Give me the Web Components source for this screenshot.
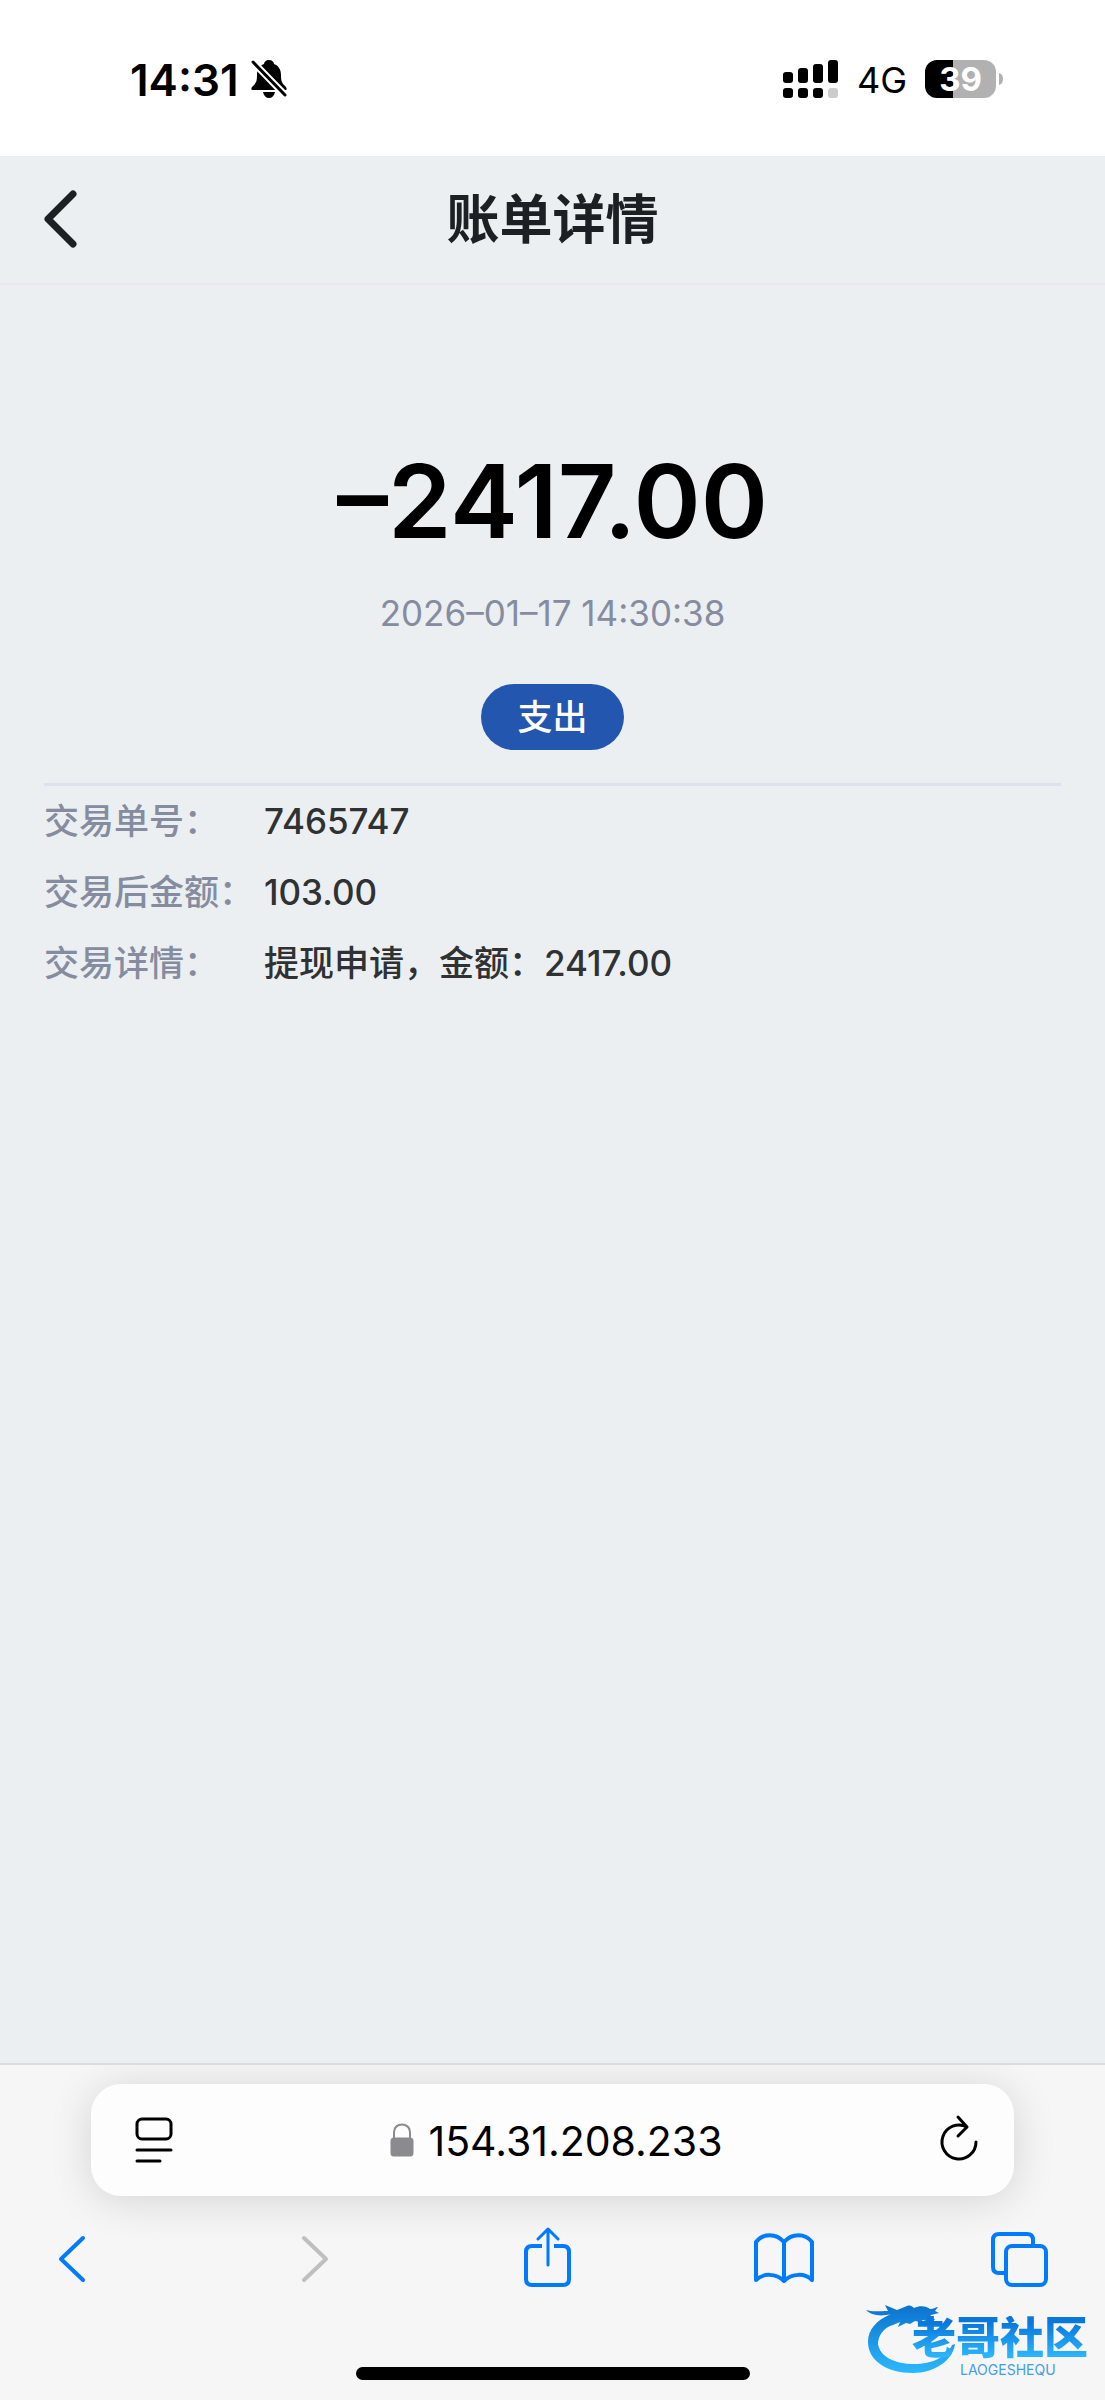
<!DOCTYPE html>
<html lang="zh-CN">

<head>
  <meta charset="UTF-8">
  <meta name="viewport" content="width=device-width, initial-scale=1">
  <title>账单详情</title>
  <style>
    body {
      margin: 0;
      min-height: 100vh;
      display: flex;
      flex-direction: column;
      background: #ebeff2;
      font-family: Inter, "Noto Sans CJK SC", sans-serif;
    }
    bill-detail {
      flex: 1;
    }
  </style>
</head>

<body>
  <status-bar time="14:31" network="4G" battery="39"></status-bar>
  <nav-header>账单详情</nav-header>
  <bill-detail>
    <span slot="amount">–2417.00</span>
    <span slot="date">2026–01–17 14:30:38</span>
    <span slot="type">支出</span>
    <bill-row label="交易单号：">7465747</bill-row>
    <bill-row label="交易后金额：">103.00</bill-row>
    <bill-row label="交易详情：">提现申请，金额：2417.00</bill-row>
  </bill-detail>
  <browser-bar url="154.31.208.233"></browser-bar>

  <script>
    // status bar of the phone
    class StatusBar extends HTMLElement {
      constructor() {
        super();
        const battery = this.getAttribute('battery');
        this.attachShadow({ mode: 'open' });
        this.shadowRoot.innerHTML = `
      <style>
        :host {
          display: flex;
          justify-content: space-between;
          align-items: center;
          box-sizing: border-box;
          height: 156px;
          padding: 2px 101px 0 130px;
          background: #fff;
          color: #000;
        }
        svg { display: block; }
        .left, .right { display: flex; align-items: center; }
        .left { gap: 12px; }
        .right { gap: 18px; }
        .time { padding-top: 2px; font-size: 44px; font-weight: 600; line-height: 52px; }
        .net { font-size: 36px; line-height: 40px; padding-top: 2px; }
        .battery { display: flex; align-items: center; gap: 3px; }
        .level {
          width: 71px;
          height: 38px;
          border-radius: 12px;
          background: linear-gradient(90deg, #000 ${battery}%, #b1b1b1 ${battery}%);
          color: #fff;
          font-size: 33px;
          font-weight: 700;
          line-height: 38px;
          text-align: center;
        }
      </style>
      <div class="left">
        <span class="time">${this.getAttribute('time')}</span>
        <svg width="36" height="40" viewBox="0 0 36 40" aria-hidden="true">
          <path d="M18 1c-3 0-5 2-5 4-5 2-7 6-7 11 0 7-1 8-5 12-1 2-1 3 1 3h32c2 0 2-1 1-3-4-4-5-5-5-12 0-5-2-9-7-11 0-2-2-4-5-4zM12 33h12c-1 4-3 6-6 6s-5-2-6-6z"/>
          <path d="M1 2l34 35" stroke="#fff" stroke-width="7"/>
          <path d="M2 3l32 33" stroke="#000" stroke-width="3" stroke-linecap="round"/>
        </svg>
      </div>
      <div class="right">
        <svg width="56" height="38" viewBox="0 0 56 38" aria-hidden="true">
          <rect x="0" y="12" width="10" height="11" rx="3"/>
          <rect x="15" y="8" width="10" height="15" rx="3"/>
          <rect x="30" y="4" width="10" height="19" rx="3"/>
          <rect x="45" y="0" width="10" height="23" rx="3"/>
          <rect x="0" y="28" width="10" height="10" rx="3"/>
          <rect x="15" y="28" width="10" height="10" rx="3"/>
          <rect x="30" y="28" width="10" height="10" rx="3"/>
          <rect x="45" y="28" width="10" height="10" rx="3" fill="#ccc"/>
        </svg>
        <span class="net">${this.getAttribute('network')}</span>
        <div class="battery">
          <div class="level">${battery}</div>
          <svg width="5" height="14" viewBox="0 0 5 14" aria-hidden="true"><path d="M0 1q4 1 4 6t-4 6z" fill="#b1b1b1"/></svg>
        </div>
      </div>`;
      }
    }
    customElements.define('status-bar', StatusBar);

    // page header with the back button
    class NavHeader extends HTMLElement {
      constructor() {
        super();
        this.attachShadow({ mode: 'open' });
        this.shadowRoot.innerHTML = `
      <style>
        :host {
          display: grid;
          grid-template-columns: 80px 1fr 80px;
          align-items: center;
          box-sizing: border-box;
          height: 129px;
          border-bottom: 2px solid #e7e8f1;
          color: #1c1f23;
        }
        button {
          height: 80px;
          padding: 0 0 0 42px;
          border: 0;
          background: none;
          color: inherit;
        }
        svg { display: block; }
        h1 { margin: 0; font-size: 53px; font-weight: 600; line-height: 64px; text-align: center; }
      </style>
      <button type="button" aria-label="返回">
        <svg width="36" height="60" viewBox="0 0 36 60" fill="none" stroke="currentColor" stroke-width="7" stroke-linecap="round" stroke-linejoin="round">
          <path d="M31 4L6 29l25 25"/>
        </svg>
      </button>
      <h1><slot></slot></h1>`;
      }
    }
    customElements.define('nav-header', NavHeader);

    // amount, date and type on top, rows below the line
    class BillDetail extends HTMLElement {
      constructor() {
        super();
        this.attachShadow({ mode: 'open' });
        this.shadowRoot.innerHTML = `
      <style>
        :host { display: block; padding: 156px 44px 0; }
        .summary {
          display: flex;
          flex-direction: column;
          align-items: center;
          padding-bottom: 33px;
          border-bottom: 3px solid #dbe1ed;
        }
        .amount { color: #000; font-size: 102px; font-weight: 600; line-height: 120px; }
        .date { margin-top: 32px; color: #868c9f; font-size: 35px; line-height: 40px; }
        .type {
          margin-top: 51px;
          padding: 0 36px;
          border-radius: 33px;
          background: #2356ae;
          color: #fff;
          font-size: 35px;
          font-weight: 500;
          line-height: 66px;
        }
      </style>
      <div class="summary">
        <div class="amount"><slot name="amount"></slot></div>
        <div class="date"><slot name="date"></slot></div>
        <div class="type"><slot name="type"></slot></div>
      </div>
      <slot></slot>`;
      }
    }
    customElements.define('bill-detail', BillDetail);

    class BillRow extends HTMLElement {
      constructor() {
        super();
        this.attachShadow({ mode: 'open' });
        this.shadowRoot.innerHTML = `
      <style>
        :host { display: block; font-size: 35px; font-weight: 500; line-height: 71px; }
        dl { display: grid; grid-template-columns: 220px 1fr; margin: 0; }
        dt { color: #868c9f; white-space: nowrap; }
        dd { margin: 0; color: #303133; }
      </style>
      <dl>
        <dt>${this.getAttribute('label')}</dt>
        <dd><slot></slot></dd>
      </dl>`;
      }
    }
    customElements.define('bill-row', BillRow);

    // logo in the corner
    class CommunityLogo extends HTMLElement {
      constructor() {
        super();
        this.attachShadow({ mode: 'open' });
        this.shadowRoot.innerHTML = `
      <style>
        :host { display: block; width: 222px; height: 78px; }
        .dragon { position: absolute; left: 0; top: 0; }
        .words { position: absolute; right: 0; top: 18px; width: 180px; }
        .name {
          font-size: 44px;
          font-weight: 900;
          line-height: 44px;
          text-align: right;
          background: linear-gradient(#0878dc 15%, #2cb4fb 90%);
          -webkit-background-clip: text;
          background-clip: text;
          color: transparent;
        }
        .latin { padding: 2px 0 0 52px; color: #3f9fe6; font-size: 14px; line-height: 16px; }
      </style>
      <svg class="dragon" width="100" height="78" viewBox="0 0 100 78" aria-hidden="true">
        <defs>
          <linearGradient id="blue" x1="0" y1="0" x2="0" y2="1">
            <stop offset="0" stop-color="#0b72cf"/>
            <stop offset="1" stop-color="#2cb8fd"/>
          </linearGradient>
        </defs>
        <path fill="url(#blue)" d="M0 12c6 2 13 1 22 1l-3-6 12 5 10-4c3-1 5 0 7 2 6-3 13-2 16 1 4 0 6-2 8-2l-3 4 4 2-8 2-2 3 6 1-3 4-9-3-3 2-5-1-5 3-4-1-8 4 2-5-7 3C17 30 12 38 12 46c2 13 17 20 36 20 18 0 33-7 38-19l3-1C87 62 69 75 47 75 20 75 2 62 2 44c0-13 9-22 23-28C14 19 5 17 0 12z"/>
      </svg>
      <div class="words">
        <div class="name">老哥社区</div>
        <div class="latin">LAOGESHEQU</div>
      </div>`;
      }
    }
    customElements.define('community-logo', CommunityLogo);

    // address field, toolbar and home indicator
    class BrowserBar extends HTMLElement {
      constructor() {
        super();
        this.attachShadow({ mode: 'open' });
        this.shadowRoot.innerHTML = `
      <style>
        :host {
          display: block;
          position: relative;
          overflow: hidden;
          padding: 19px 0 20px;
          border-top: 2px solid #d9dbdd;
          background: #f6f6f6;
        }
        button { display: block; padding: 0; border: 0; background: none; color: inherit; }
        svg { display: block; fill: none; stroke: currentColor; stroke-width: 3; stroke-linecap: round; stroke-linejoin: round; }
        .address {
          display: flex;
          align-items: center;
          justify-content: space-between;
          box-sizing: border-box;
          height: 112px;
          margin: 0 91px;
          padding: 0 34px 0 42px;
          border-radius: 30px;
          background: #fdfdfd;
          box-shadow: 0 4px 44px rgba(0, 0, 0, .14);
          color: #000;
        }
        label { display: flex; align-items: center; gap: 14px; }
        input {
          field-sizing: content;
          padding: 2px 0 0;
          border: 0;
          outline: 0;
          background: none;
          color: inherit;
          font: 41px/52px Inter, sans-serif;
        }
        .lock { fill: #8a8a8f; stroke: #8a8a8f; }
        nav {
          display: flex;
          align-items: center;
          justify-content: space-between;
          padding: 23px 53px 0 40px;
          color: #007aff;
        }
        nav button { width: 64px; height: 80px; }
        nav svg { stroke-width: 4; }
        nav button:disabled { color: #bfbfbf; }
        .home { width: 394px; height: 13px; margin: 68px auto 0; border-radius: 7px; background: #000; }
        community-logo { position: absolute; right: 17px; bottom: 24px; }
      </style>
      <div class="address">
        <button type="button" aria-label="阅读">
          <svg width="42" height="48" viewBox="0 0 42 48">
            <rect x="4" y="3" width="34" height="20" rx="5"/>
            <path d="M4 34h34M4 45h23"/>
          </svg>
        </button>
        <label>
          <svg class="lock" width="24" height="34" viewBox="0 0 24 34" aria-hidden="true">
            <path d="M4 16V9c0-10 16-10 16 0v7" fill="none" stroke-width="2"/>
            <rect x="2" y="16" width="20" height="16" rx="2"/>
          </svg>
          <input type="text" aria-label="网址" value="${this.getAttribute('url')}">
        </label>
        <button type="button" aria-label="刷新">
          <svg width="42" height="54" viewBox="0 0 42 54">
            <path d="M38 29a17 17 0 1 1-9-15M20 4l9 10-9 9"/>
          </svg>
        </button>
      </div>
      <nav>
        <button type="button" aria-label="后退">
          <svg width="64" height="64" viewBox="0 0 64 64"><path d="M43 11L21 32l22 21"/></svg>
        </button>
        <button type="button" aria-label="前进" disabled>
          <svg width="64" height="64" viewBox="0 0 64 64"><path d="M27 11l22 21-22 21"/></svg>
        </button>
        <button type="button" aria-label="分享">
          <svg width="64" height="64" viewBox="0 0 64 64">
            <path d="M28 19H18q-6 0-6 6v27q0 6 6 6h31q6 0 6-6V25q0-6-6-6H40" stroke-linecap="butt"/>
            <path d="M34 38V3M24 12L34 2l10 10" stroke-width="3"/>
          </svg>
        </button>
        <button type="button" aria-label="书签">
          <svg width="64" height="64" viewBox="0 0 64 64">
            <path d="M33 15C25 6 12 6 5 15v38c7-7 20-7 28 1 8-8 21-8 28-1V15c-7-9-20-9-28 0zv39"/>
          </svg>
        </button>
        <button type="button" aria-label="标签页">
          <svg width="64" height="64" viewBox="0 0 64 64">
            <path d="M17 46h-6q-6 0-6-6V13q0-6 6-6h28q6 0 6 6v5"/>
            <rect x="18" y="19" width="40" height="39" rx="6"/>
          </svg>
        </button>
      </nav>
      <div class="home"></div>
      <community-logo></community-logo>`;
      }
    }
    customElements.define('browser-bar', BrowserBar);
  </script>
</body>

</html>
